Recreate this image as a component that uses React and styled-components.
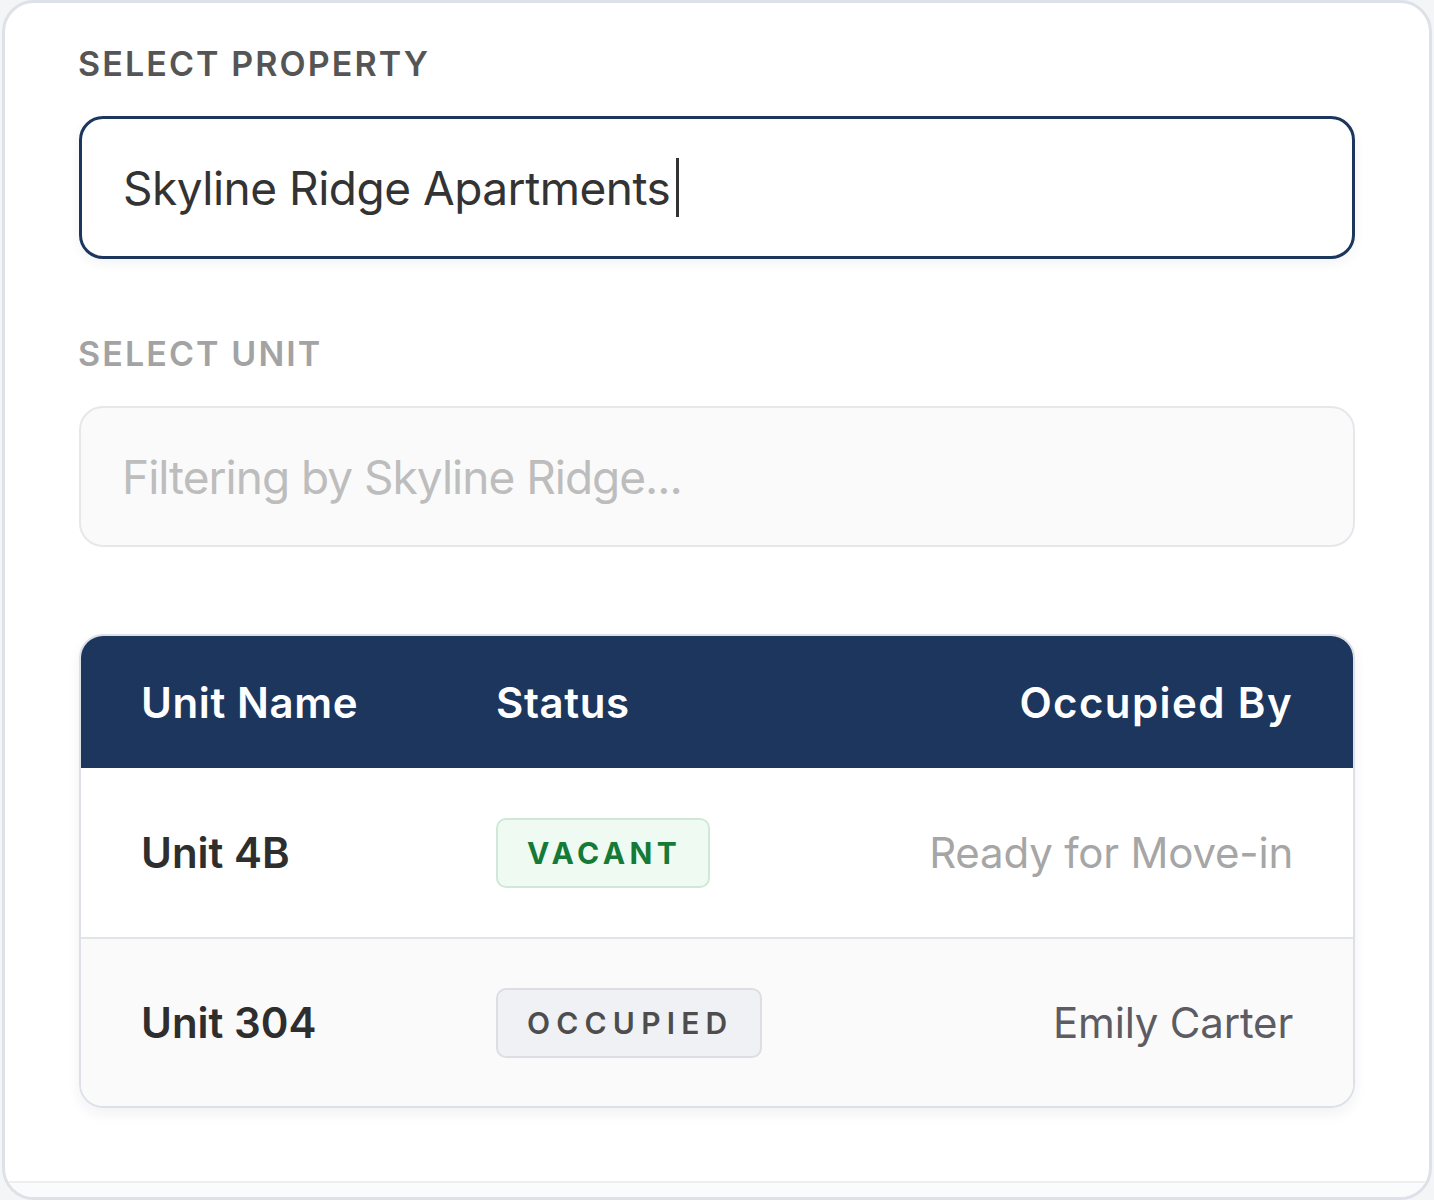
import React from "react";
import styled, { createGlobalStyle } from "styled-components";

const GlobalStyle = createGlobalStyle`
  html, body {
    margin: 0;
    padding: 0;
    background: #f4f5f7;
  }
  body {
    font-family: "Inter", "Noto Sans", sans-serif;
    -webkit-font-smoothing: antialiased;
  }
`;

const Card = styled.div`
  margin: 0 2px;
  height: 1200px;
  box-sizing: border-box;
  background: #ffffff;
  border: 3px solid #dde1e8;
  border-radius: 32px;
  display: flex;
  flex-direction: column;
  overflow: hidden;
`;

const Body = styled.div`
  flex: 1;
  padding: 41px 74px 0 74px;
  display: flex;
  flex-direction: column;
`;

const Label = styled.div`
  font-size: 34px;
  line-height: 40px;
  font-weight: 600;
  letter-spacing: 2.1px;
  text-transform: uppercase;
  color: ${(p) => (p.$muted ? "#a3a3a3" : "#555555")};
  margin-bottom: 32px;
  margin-left: -1px;
`;

const Field = styled.div`
  box-sizing: border-box;
  height: ${(p) => (p.$disabled ? "141px" : "143px")};
  padding: 0 41px;
  display: flex;
  align-items: center;
  border-radius: 24px;
  font-size: 46px;
  letter-spacing: ${(p) => (p.$disabled ? "-1px" : "-0.5px")};
  border: ${(p) => (p.$disabled ? "2px solid #e6e7eb" : "3px solid #1c365d")};
  background: ${(p) => (p.$disabled ? "#fafafa" : "#ffffff")};
  color: ${(p) => (p.$disabled ? "#bdbdbd" : "#333333")};
  box-shadow: ${(p) => (p.$disabled ? "none" : "0 4px 12px rgba(28, 54, 93, 0.06)")};
  margin-bottom: ${(p) => p.$gap || "0"};
`;

const Caret = styled.span`
  display: inline-block;
  width: 3px;
  height: 59px;
  margin-left: 6px;
  background: #333333;
`;

const Table = styled.div`
  margin-top: 87px;
  border: 2px solid #dde0e6;
  border-radius: 24px;
  overflow: hidden;
  box-shadow: 0 6px 14px rgba(20, 30, 60, 0.06);
`;

const Row = styled.div`
  display: grid;
  grid-template-columns: 355px 1fr auto;
  align-items: center;
  padding: 0 60px;
  height: ${(p) => p.$height};
  background: ${(p) => p.$bg || "#ffffff"};
  border-top: ${(p) => (p.$divider ? "2px solid #e2e4e9" : "none")};
`;

const HeadCell = styled.div`
  color: #ffffff;
  font-size: 42px;
  font-weight: 600;
  letter-spacing: ${(p) => (p.$right ? "1.4px" : "0.6px")};
  text-align: ${(p) => (p.$right ? "right" : "left")};
`;

const UnitName = styled.div`
  color: #2e2e2e;
  font-size: 42px;
  font-weight: 600;
  letter-spacing: 0;
`;

const Occupant = styled.div`
  font-size: 42px;
  letter-spacing: -0.2px;
  text-align: right;
  color: ${(p) => p.$color};
`;

const Badge = styled.span`
  justify-self: start;
  box-sizing: border-box;
  height: 70px;
  display: inline-flex;
  align-items: center;
  padding: 0 27px 0 29px;
  border-radius: 10px;
  font-size: 30px;
  font-weight: ${(p) => (p.$tone === "green" ? 700 : 600)};
  letter-spacing: ${(p) => (p.$tone === "green" ? "4.4px" : "6.2px")};
  border: 2px solid ${(p) => (p.$tone === "green" ? "#cfe8d8" : "#dcdee4")};
  background: ${(p) => (p.$tone === "green" ? "#effbf2" : "#f0f1f5")};
  color: ${(p) => (p.$tone === "green" ? "#157a37" : "#4d4d4d")};
`;

const Footer = styled.div`
  height: 14px;
  border-top: 2px solid #eceef2;
  background: #fafbfc;
`;

const units = [
  { name: "Unit 4B", status: "VACANT", tone: "green", by: "Ready for Move-in", color: "#a6a6a6", bg: "#ffffff", height: "169px" },
  { name: "Unit 304", status: "OCCUPIED", tone: "gray", by: "Emily Carter", color: "#5c5c62", bg: "#fafafa", height: "167px" },
];

export default function App() {
  return (
    <>
      <GlobalStyle />
      <Card>
        <Body>
          <Label>Select Property</Label>
          <Field $gap="75px">
            Skyline Ridge Apartments
            <Caret />
          </Field>
          <Label $muted>Select Unit</Label>
          <Field $disabled>Filtering by Skyline Ridge...</Field>
          <Table>
            <Row $height="132px" $bg="#1c365d">
              <HeadCell>Unit Name</HeadCell>
              <HeadCell>Status</HeadCell>
              <HeadCell $right>Occupied By</HeadCell>
            </Row>
            {units.map((u, i) => (
              <Row key={u.name} $height={u.height} $bg={u.bg} $divider={i > 0}>
                <UnitName>{u.name}</UnitName>
                <Badge $tone={u.tone}>{u.status}</Badge>
                <Occupant $color={u.color}>{u.by}</Occupant>
              </Row>
            ))}
          </Table>
        </Body>
        <Footer />
      </Card>
    </>
  );
}
